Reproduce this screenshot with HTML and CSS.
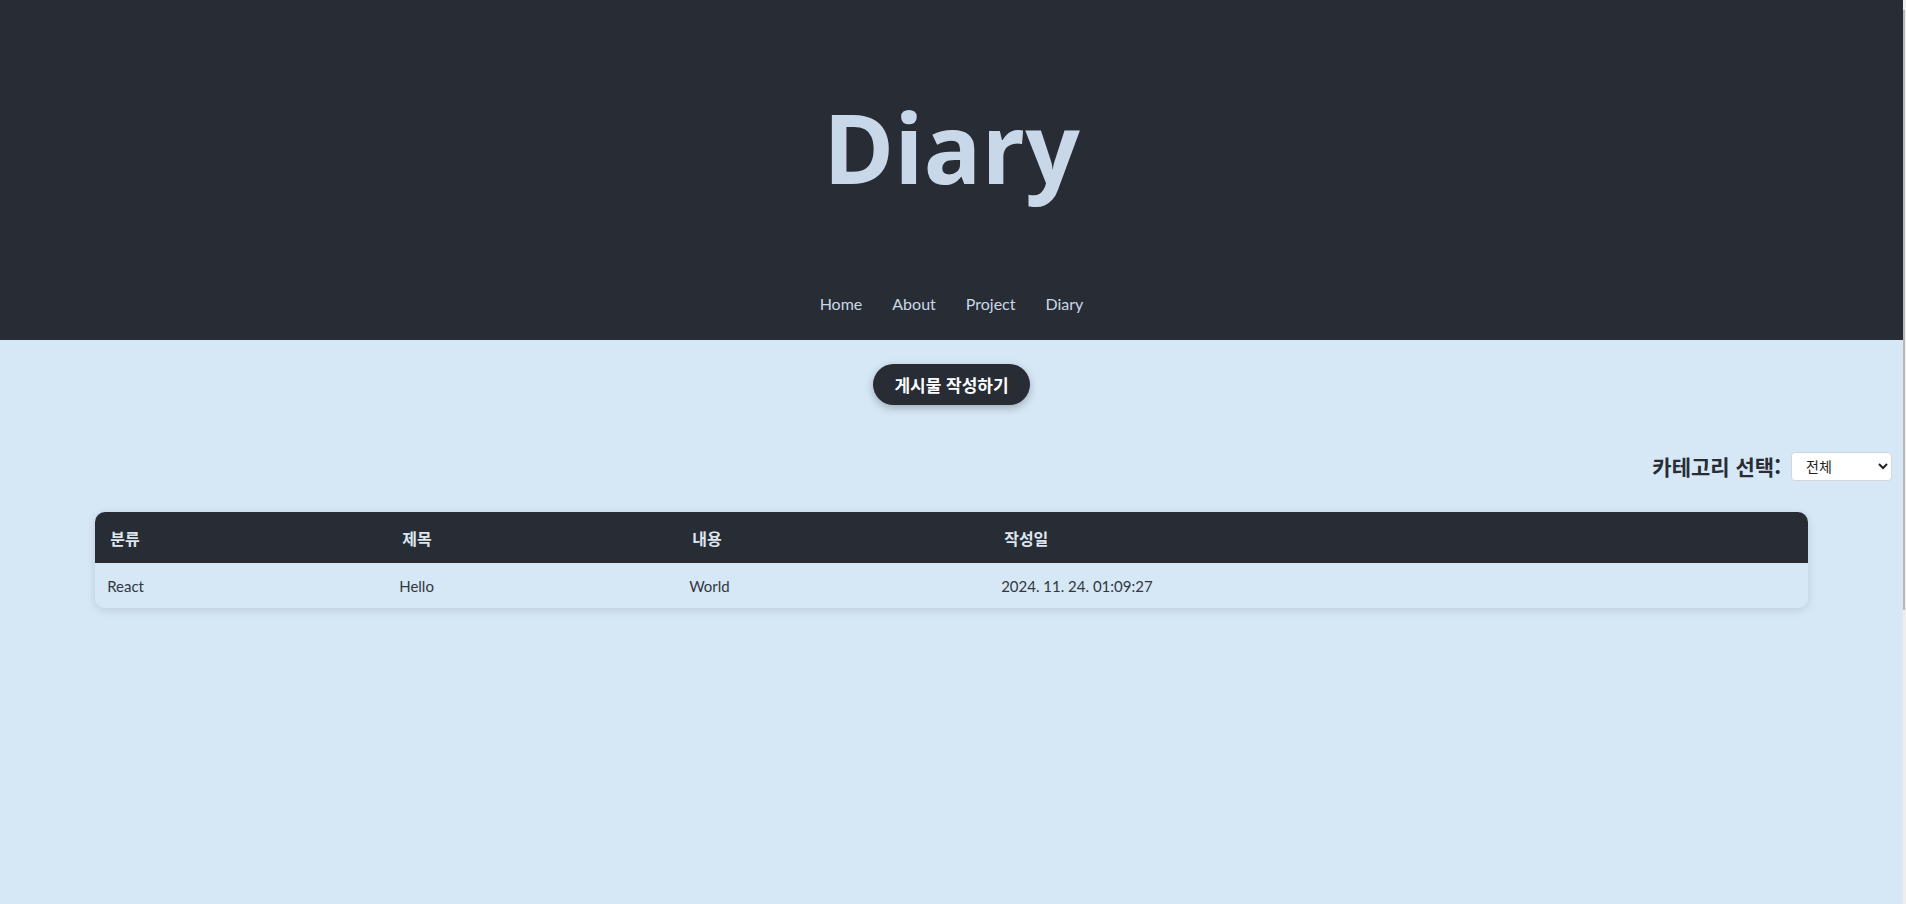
FILE: index.html
```html
<!DOCTYPE html>
<html lang="ko">
<head>
<meta charset="utf-8">
<title>Diary</title>
<link rel="stylesheet" href="styles.css">
</head>
<body>
<div class="frame">
  <div class="page">
    <header class="site-header">
      <h1 class="title">Diary</h1>
      <nav class="nav">
        <a href="#">Home</a>
        <a href="#">About</a>
        <a href="#">Project</a>
        <a href="#">Diary</a>
      </nav>
    </header>
    <main class="content">
      <div class="write-row">
        <button class="write-btn">게시물 작성하기</button>
      </div>
      <div class="filter-row">
        <label class="filter-label" for="cat">카테고리 선택:</label>
        <select id="cat" class="filter-select">
          <option>전체</option>
        </select>
      </div>
      <div class="table-wrap">
        <table class="posts">
          <colgroup>
            <col class="c1">
            <col class="c2">
            <col class="c3">
            <col class="c4">
          </colgroup>
          <thead>
            <tr>
              <th>분류</th>
              <th>제목</th>
              <th>내용</th>
              <th>작성일</th>
            </tr>
          </thead>
          <tbody>
            <tr>
              <td>React</td>
              <td>Hello</td>
              <td>World</td>
              <td>2024. 11. 24. 01:09:27</td>
            </tr>
          </tbody>
        </table>
      </div>
    </main>
  </div>
  <div class="scrollbar"><div class="thumb"></div></div>
</div>
</body>
</html>
```
FILE: styles.css
```css
html, body {
  margin: 0;
  padding: 0;
  height: 100%;
}
body {
  background: #d6e7f6;
  font-family: Lato, "Noto Sans CJK KR", sans-serif;
  color: #282c35;
  overflow: hidden;
}
.frame {
  display: flex;
  height: 904px;
}
.page {
  flex: 1;
  min-width: 0;
}
.scrollbar {
  width: 3px;
  background: #eeeeee;
  padding-top: 10px;
}
.thumb {
  width: 2px;
  height: 600px;
  background: #b8b8b8;
}
.site-header {
  background: #282c35;
  height: 340px;
  box-sizing: border-box;
  display: flex;
  flex-direction: column;
  align-items: center;
  padding-top: 99px;
}
.title {
  margin: 0;
  font-family: "Open Sans", "Noto Sans", sans-serif;
  font-size: 96px;
  line-height: 96px;
  font-weight: 700;
  color: #c8d8e8;
}
.nav {
  margin-top: 99px;
  display: flex;
  gap: 30px;
}
.nav a {
  color: #c8d8e8;
  text-decoration: none;
  font-family: Lato, sans-serif;
  font-size: 16px;
  line-height: 20px;
}
.write-row {
  display: flex;
  justify-content: center;
  padding-top: 24px;
}
.write-btn {
  height: 41px;
  width: 157px;
  border: none;
  border-radius: 21px;
  background: #282c35;
  color: #ffffff;
  font-family: "Noto Sans CJK KR", sans-serif;
  font-weight: 700;
  font-size: 17px;
  box-shadow: 0 3px 8px rgba(0, 0, 0, 0.25);
  cursor: pointer;
}
.filter-row {
  display: flex;
  justify-content: flex-end;
  align-items: center;
  gap: 10px;
  padding-right: 11px;
  margin-top: 46px;
}
.filter-label {
  font-family: "Noto Sans CJK KR", sans-serif;
  font-size: 21px;
  font-weight: 700;
  color: #282c35;
}
.filter-select {
  width: 101px;
  height: 29px;
  border: 1px solid #d0d7df;
  border-radius: 4px;
  background: #ffffff;
  font-family: "Noto Sans CJK KR", sans-serif;
  font-size: 14px;
  padding: 0 8px 0 10px;
  color: #222;
}
.table-wrap {
  width: 90%;
  margin: 31px auto 0;
  border-radius: 10px;
  overflow: hidden;
  box-shadow: 0 2px 10px rgba(0, 0, 0, 0.12);
}
.posts {
  width: 100%;
  border-collapse: collapse;
  table-layout: fixed;
}
.posts th {
  background: #282c35;
  color: #dde6ef;
  font-family: "Noto Sans CJK KR", sans-serif;
  font-weight: 700;
  font-size: 16px;
  text-align: left;
  height: 51px;
  padding: 0 0 0 15px;
}
.posts td {
  background: #d6e7f6;
  color: #33373f;
  font-family: Lato, sans-serif;
  font-size: 15px;
  height: 45px;
  padding: 0 0 0 12px;
}
.c1 { width: 292px; }
.c2 { width: 290px; }
.c3 { width: 312px; }
```
